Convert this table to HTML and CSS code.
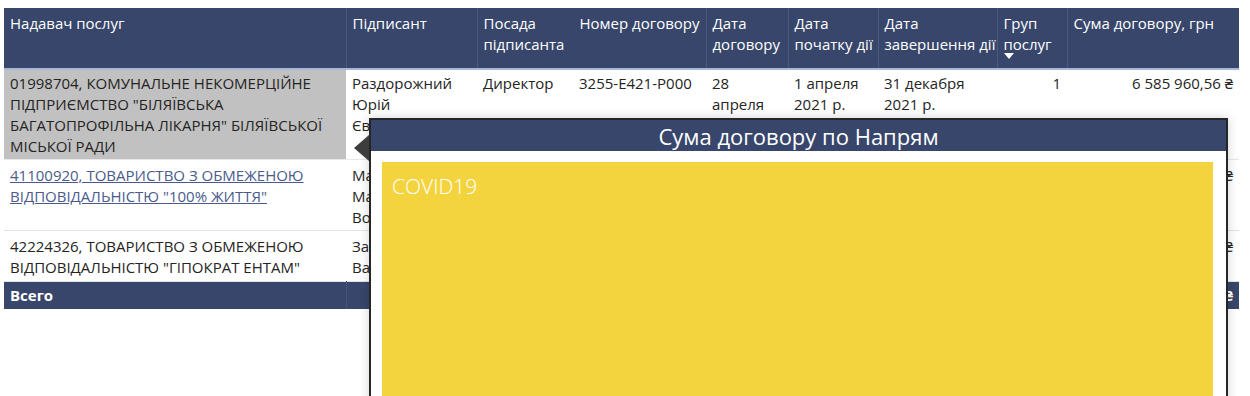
FILE: index.html
```html
<!DOCTYPE html>
<html lang="uk">
<head>
<meta charset="utf-8">
<title>Договори</title>
<link rel="stylesheet" href="styles.css">
</head>
<body>
<div class="visual">
  <table class="grid">
    <colgroup>
      <col class="c1"><col class="c2"><col class="c3"><col class="c4"><col class="c5"><col class="c6"><col class="c7"><col class="c8"><col class="c9">
    </colgroup>
    <thead>
      <tr>
        <th>Надавач послуг</th>
        <th>Підписант</th>
        <th>Посада<br>підписанта</th>
        <th class="nosep">Номер договору</th>
        <th>Дата<br>договору</th>
        <th>Дата<br>початку дії</th>
        <th>Дата<br>завершення дії</th>
        <th>Груп<br>послуг<span class="sort"></span></th>
        <th>Сума договору, грн</th>
      </tr>
    </thead>
    <tbody>
      <tr class="r1">
        <td class="sel">01998704, КОМУНАЛЬНЕ НЕКОМЕРЦІЙНЕ<br>ПІДПРИЄМСТВО "БІЛЯЇВСЬКА<br>БАГАТОПРОФІЛЬНА ЛІКАРНЯ" БІЛЯЇВСЬКОЇ<br>МІСЬКОЇ РАДИ</td>
        <td>Раздорожний<br>Юрій<br>Євгенович</td>
        <td>Директор</td>
        <td>3255-E421-P000</td>
        <td>28<br>апреля<br>2021 р.</td>
        <td>1 апреля<br>2021 р.</td>
        <td>31 декабря<br>2021 р.</td>
        <td class="num">1</td>
        <td class="num">6 585 960,56 ₴</td>
      </tr>
      <tr class="r2">
        <td><a href="#" class="link">41100920, ТОВАРИСТВО З ОБМЕЖЕНОЮ<br>ВІДПОВІДАЛЬНІСТЮ "100% ЖИТТЯ"</a></td>
        <td>Мазур<br>Марина<br>Володимирівна</td>
        <td>Директор</td>
        <td>0712-P000</td>
        <td>12<br>травня<br>2021 р.</td>
        <td>12 травня<br>2021 р.</td>
        <td>31 декабря<br>2021 р.</td>
        <td class="num">1</td>
        <td class="num">1 204 300,00 ₴</td>
      </tr>
      <tr class="r3">
        <td>42224326, ТОВАРИСТВО З ОБМЕЖЕНОЮ<br>ВІДПОВІДАЛЬНІСТЮ "ГІПОКРАТ ЕНТАМ"</td>
        <td>Зайченко<br>Валерій</td>
        <td>Директор</td>
        <td>1488-P000</td>
        <td>3 червня<br>2021 р.</td>
        <td>3 червня<br>2021 р.</td>
        <td>31 декабря<br>2021 р.</td>
        <td class="num">1</td>
        <td class="num">845 120,00 ₴</td>
      </tr>
    </tbody>
    <tfoot>
      <tr>
        <td>Всего</td>
        <td></td><td></td><td></td><td></td><td></td><td></td>
        <td class="num"></td>
        <td class="num">8 635 380,56 ₴</td>
      </tr>
    </tfoot>
  </table>

  <div class="tooltip">
    <div class="tip-title">Сума договору по Напрям</div>
    <div class="tip-body">
      <div class="treemap">
        <div class="tile">COVID19</div>
      </div>
    </div>
  </div>
</div>
</body>
</html>
```
FILE: styles.css
```css
* { box-sizing: border-box; }

html, body {
  margin: 0;
  padding: 0;
  background: #ffffff;
}

body {
  font-family: "Segoe UI", "Open Sans", "Noto Sans", sans-serif;
  font-size: 15px;
  color: #252423;
  width: 1250px;
  height: 396px;
  overflow: hidden;
}

.visual {
  position: relative;
  padding: 8px 0 0 4px;
  height: 396px;
}

.grid {
  border-collapse: collapse;
  table-layout: fixed;
  width: 1235px;
  line-height: 21px;
}

.c1 { width: 342px; }
.c2 { width: 131px; }
.c3 { width: 96px; }
.c4 { width: 133px; }
.c5 { width: 82px; }
.c6 { width: 90px; }
.c7 { width: 119px; }
.c8 { width: 70px; }
.c9 { width: 172px; }

.grid thead tr {
  height: 61px;
}

.grid th {
  background: #37466a;
  color: #ffffff;
  font-weight: 400;
  text-align: left;
  vertical-align: top;
  padding: 5px 6px 0 6px;
  border-left: 1px solid #4a5a80;
  border-bottom: 2px solid #a7b8d4;
  white-space: nowrap;
}

.grid th:first-child { border-left: none; }
.grid th.nosep { border-left-color: #37466a; }

.sort {
  display: block;
  width: 0;
  height: 0;
  margin-top: -2px;
  border-left: 5px solid transparent;
  border-right: 5px solid transparent;
  border-top: 6px solid #ffffff;
}

.grid td {
  vertical-align: top;
  padding: 3px 6px 2px 6px;
  white-space: nowrap;
  overflow: hidden;
}

.grid tbody tr {
  border-bottom: 1px solid #e3e3e3;
}

.grid .r2 td { padding-top: 5px; }
.grid .r3 td { padding-top: 5px; padding-bottom: 3px; }
.grid .r1 { border-bottom-color: #e8e8e8; }

.grid td.sel {
  background: #c1c1c1;
}

.grid td.num {
  text-align: right;
}

.link {
  color: #4a5b8c;
  text-decoration: underline;
}

.grid tfoot td {
  background: #37466a;
  color: #ffffff;
  font-weight: 700;
  padding: 3px 6px 3px 6px;
  border-left: 1px solid #45557a;
  height: 27px;
}
.grid tfoot td:first-child { border-left: none; }

/* Tooltip over the table */
.tooltip {
  position: absolute;
  left: 369px;
  top: 118px;
  width: 859px;
  height: 300px;
  border: 2px solid #262626;
  background: #ffffff;
  box-shadow: 0 0 10px rgba(0, 0, 0, 0.18);
}

.tooltip::before {
  content: "";
  position: absolute;
  left: -17px;
  top: 15px;
  width: 0;
  height: 0;
  border-top: 13px solid transparent;
  border-bottom: 13px solid transparent;
  border-right: 15px solid #3d3d3d;
}

.tip-title {
  background: #37466a;
  color: #ffffff;
  font-size: 22px;
  height: 31px;
  line-height: 32px;
  text-align: center;
}

.tip-body {
  padding: 11px 13px 0 11px;
}

.treemap {
  height: 260px;
  background: #f3d43f;
  display: flex;
}

.tile {
  flex: 1;
  color: #ffffff;
  font-size: 21px;
  font-weight: 300;
  padding: 10px 10px;
  line-height: 28px;
}
```
